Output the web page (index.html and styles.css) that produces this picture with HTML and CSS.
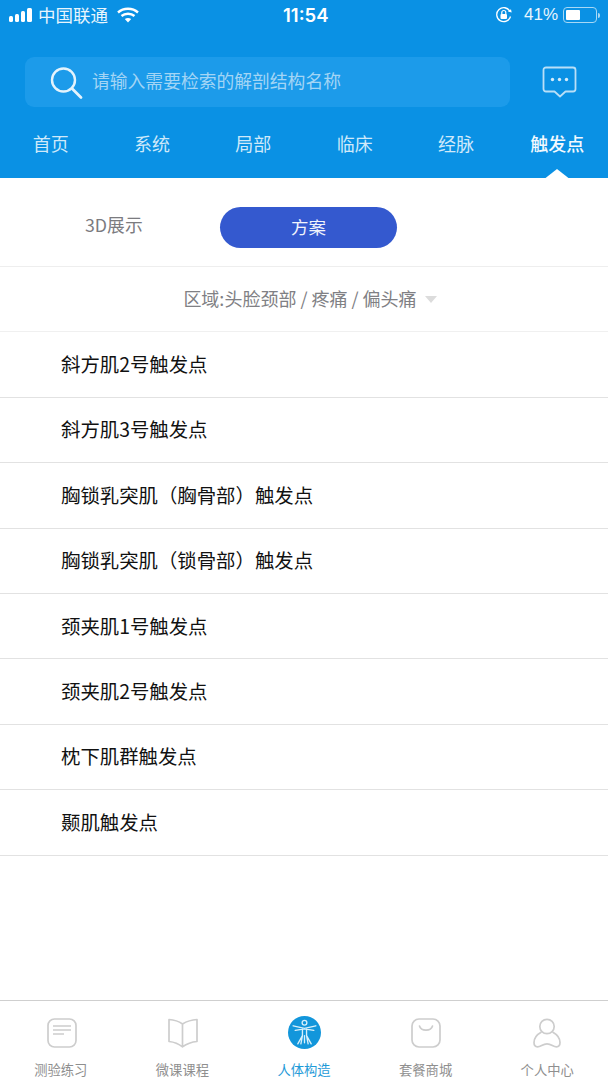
FILE: index.html
```html
<!DOCTYPE html>
<html lang="zh-CN">
<head>
<meta charset="utf-8">
<title>触发点</title>
<link rel="stylesheet" href="styles.css">
</head>
<body>
<div class="page">
  <header class="header">
    <div class="status">
      <div class="status-left">
        <svg class="signal" width="26" height="16" viewBox="0 0 26 16"><rect x="0" y="9" width="4" height="6" rx="1.5"/><rect x="6" y="7" width="4" height="8" rx="1.5"/><rect x="12" y="4" width="4" height="11" rx="1.5"/><rect x="18" y="1" width="5" height="14" rx="1.5"/></svg>
        <span class="carrier">中国联通</span>
        <svg class="wifi" width="22" height="16" viewBox="0 0 22 16"><path d="M1 5.5C6.5.5 15.500.5 21 5.500" fill="none" stroke="#fff" stroke-width="2.400"/><path d="M4.500 9C8 6 14 6 17.500 9" fill="none" stroke="#fff" stroke-width="2.400"/><path d="M7.800 12c2-1.500 4.400-1.500 6.400 0L11 15.500z" fill="#fff"/></svg>
      </div>
      <span class="time">11:54</span>
      <div class="status-right">
        <svg width="18" height="18" viewBox="0 0 18 18"><path d="M15.500 10.500A7 7 0 1 1 15 5.500" fill="none" stroke="#fff" stroke-width="1.300"/><path d="M13 6h4l-1.500-3z" fill="#fff" transform="rotate(15 15 5)"/><rect x="5.500" y="8" width="6.500" height="5" rx="1" fill="#fff"/><path d="M6.800 8V6.500a2 2 0 0 1 4 0V8" fill="none" stroke="#fff" stroke-width="1.200"/></svg>
        <span class="battery-pct">41%</span>
        <div class="battery"><div class="battery-fill"></div></div>
        <div class="battery-tip"></div>
      </div>
    </div>
    <div class="search-row">
      <div class="search">
        <svg class="search-icon" width="34" height="34" viewBox="0 0 34 34"><circle cx="14.500" cy="14" r="11.500" fill="none" stroke="#e4f3fc" stroke-width="2.400"/><path d="M23 22.500 L32 31.500" stroke="#e4f3fc" stroke-width="2.800" stroke-linecap="round"/></svg>
        <span class="search-text">请输入需要检索的解剖结构名称</span>
      </div>
      <svg class="msg" width="36" height="34" viewBox="0 0 36 34"><path d="M4 2.500H31a2.500 2.500 0 0 1 2.500 2.500V24a2.500 2.500 0 0 1-2.500 2.500H23.500L18 31.500 12.500 26.500H4A2.500 2.500 0 0 1 1.500 24V5A2.500 2.500 0 0 1 4 2.500Z" fill="none" stroke="#b9dff7" stroke-width="1.800" stroke-linejoin="round"/><circle cx="10.500" cy="14.500" r="1.700" fill="#d5ecfa"/><circle cx="17.500" cy="14.500" r="1.700" fill="#d5ecfa"/><circle cx="24.500" cy="14.500" r="1.700" fill="#d5ecfa"/></svg>
    </div>
    <nav class="tabs">
      <span class="tab">首页</span>
      <span class="tab">系统</span>
      <span class="tab">局部</span>
      <span class="tab">临床</span>
      <span class="tab">经脉</span>
      <span class="tab tab-active">触发点</span>
    </nav>
  </header>
  <div class="toggle-row">
    <span class="toggle-plain">3D展示</span>
    <span class="toggle-pill">方案</span>
  </div>
  <div class="filter-row">
    <span class="filter-text">区域:头脸颈部 / 疼痛 / 偏头痛</span>
    <span class="caret"></span>
  </div>
  <ul class="list">
    <li class="item">斜方肌2号触发点</li>
    <li class="item">斜方肌3号触发点</li>
    <li class="item">胸锁乳突肌（胸骨部）触发点</li>
    <li class="item">胸锁乳突肌（锁骨部）触发点</li>
    <li class="item">颈夹肌1号触发点</li>
    <li class="item">颈夹肌2号触发点</li>
    <li class="item">枕下肌群触发点</li>
    <li class="item">颞肌触发点</li>
  </ul>
  <footer class="tabbar">
    <div class="bar-item">
      <div class="bar-icon bar-icon-nudge"><svg width="30" height="30" viewBox="0 0 30 30"><rect x="1" y="1" width="28" height="28" rx="6.500" fill="none" stroke="#cdcdcd" stroke-width="1.700"/><path d="M6 8H24M6 12H24M6 16H17" stroke="#cdcdcd" stroke-width="1.700" fill="none"/></svg></div>
      <span class="bar-label">测验练习</span>
    </div>
    <div class="bar-item">
      <div class="bar-icon bar-icon-nudge"><svg width="30" height="30" viewBox="0 0 30 30"><path d="M14.500 6C11 3.500 6 1.800 1 1.500V23.500C6 24 11 26 14.500 28.800 18.500 26 23.500 24 29 23.500V1.500C23.500 1.800 18.500 3.500 14.500 6ZM14.500 6V28.800" fill="none" stroke="#cdcdcd" stroke-width="1.700" stroke-linejoin="round"/></svg></div>
      <span class="bar-label">微课课程</span>
    </div>
    <div class="bar-item bar-active">
      <div class="bar-icon bar-icon-nudge"><svg width="33" height="33" viewBox="0 0 32 32"><circle cx="16" cy="16" r="16" fill="#1296db"/><g fill="none" stroke="#d8f0fb" stroke-width="1.300" stroke-linecap="round"><circle cx="16" cy="6.500" r="2.300"/><path d="M5 9.500 16 12 27 9.500M7 14 16 12.500 25 14"/><path d="M14 12.500V19L9.500 27M18 12.500V19L22.500 27M16 19V26M14 19 12.500 27M18 19 19.500 27"/></g></svg></div>
      <span class="bar-label">人体构造</span>
    </div>
    <div class="bar-item">
      <div class="bar-icon"><svg width="30" height="30" viewBox="0 0 30 30"><rect x="1" y="1" width="28" height="28" rx="7" fill="none" stroke="#cdcdcd" stroke-width="1.700"/><path d="M8.500 8C10 13.500 20 13.500 21.500 8" fill="none" stroke="#cdcdcd" stroke-width="1.700" stroke-linecap="round"/></svg></div>
      <span class="bar-label">套餐商城</span>
    </div>
    <div class="bar-item">
      <div class="bar-icon"><svg width="28" height="30" viewBox="0 0 28 30"><circle cx="14" cy="8.500" r="7.200" fill="none" stroke="#cdcdcd" stroke-width="1.700"/><path d="M8.500 14C4 16.500 1 20.500 1 24.500 1 27.500 2.500 28.800 4.500 28.800 8 28.800 9.500 25.800 14 25.800S20 28.800 23.500 28.800C25.500 28.800 27 27.500 27 24.500 27 20.500 24 16.500 19.500 14" fill="none" stroke="#cdcdcd" stroke-width="1.700" stroke-linejoin="round"/></svg></div>
      <span class="bar-label">个人中心</span>
    </div>
  </footer>
</div>
</body>
</html>
```
FILE: styles.css
```css
* { box-sizing: border-box; }
html, body { margin: 0; padding: 0; }
body {
  background: #fff;
  font-family: "Noto Sans CJK SC", "Liberation Sans", sans-serif;
}
.page {
  width: 608px;
  height: 1080px;
  display: flex;
  flex-direction: column;
  overflow: hidden;
}
.header {
  height: 178px;
  background: #0a91e4;
  color: #fff;
  display: flex;
  flex-direction: column;
  flex: none;
}
.status {
  height: 57px;
  padding: 0 8px 27px 9px;
  display: flex;
  align-items: center;
  justify-content: space-between;
  position: relative;
}
.status-left, .status-right { display: flex; align-items: center; }
.signal { fill: #fff; margin-right: 3px; }
.carrier { font-size: 17.500px; line-height: 30px; color: #e8f5fd; }
.wifi { margin-left: 9px; }
.time {
  position: absolute;
  left: 283px;
  top: 0;
  font-family: "Inter", "Liberation Sans", sans-serif;
  font-weight: 600;
  font-size: 18.500px;
  line-height: 30px;
}
.battery-pct {
  font-family: "Liberation Sans", sans-serif;
  font-size: 17px;
  line-height: 30px;
  margin: 0 5px 0 11px;
  color: #e8f5fd;
}
.battery {
  width: 34px;
  height: 16px;
  border: 1px solid #a7d8f5;
  border-radius: 4px;
  padding: 2px;
}
.battery-fill { width: 14px; height: 100%; background: #fff; border-radius: 1px; }
.battery-tip { width: 2px; height: 5px; margin-left: 1px; background: #a7d8f5; border-radius: 0 2px 2px 0; }
.search-row {
  height: 50px;
  padding: 0 30px 0 25px;
  display: flex;
  align-items: center;
  justify-content: space-between;
  flex: none;
}
.search {
  width: 485px;
  height: 50px;
  background: #1c9bea;
  border-radius: 9px;
  display: flex;
  align-items: center;
  padding-left: 24px;
}
.search-icon { flex: none; margin-top: 2px; }
.search-text {
  font-size: 17.800px;
  line-height: 26px;
  color: #a3d5f5;
  margin-left: 9px;
  margin-top: -4px;
}
.msg { flex: none; margin-top: -1px; }
.tabs {
  flex: 1;
  display: grid;
  grid-template-columns: repeat(6, 1fr);
  align-items: center;
  padding-top: 1px;
}
.tab {
  position: relative;
  text-align: center;
  font-size: 18px;
  line-height: 26px;
  color: #cfe9fa;
}
.tab-active { color: #f2f9fe; font-weight: 500; }
.tab-active::after {
  content: "";
  position: absolute;
  left: 50%;
  bottom: -23.500px;
  margin-left: -14px;
  border-left: 14px solid transparent;
  border-right: 14px solid transparent;
  border-bottom: 11px solid #fff;
}
.toggle-row {
  height: 89px;
  flex: none;
  display: flex;
  align-items: center;
  padding-left: 85px;
  border-bottom: 1px solid #eeeeee;
}
.toggle-plain {
  font-size: 17.800px;
  line-height: 24px;
  color: #7b7b7f;
  margin-top: 4px;
  width: 135px;
}
.toggle-pill {
  width: 177px;
  height: 41px;
  margin-top: 11px;
  border-radius: 21px;
  background: #3459cf;
  color: #f1f4fc;
  font-size: 17.500px;
  line-height: 39px;
  text-align: center;
}
.filter-row {
  height: 65.400px;
  flex: none;
  display: flex;
  align-items: center;
  justify-content: center;
  border-bottom: 1px solid #f0f0f0;
  padding-left: 12px;
}
.filter-text {
  font-size: 18px;
  line-height: 26px;
  color: #808084;
  margin-top: -3px;
}
.caret {
  margin-left: 8px;
  border-left: 6.500px solid transparent;
  border-right: 6.500px solid transparent;
  border-top: 7px solid #dcdcdc;
}
.list { list-style: none; margin: 0; padding: 0; flex: none; }
.item {
  height: 65.400px;
  display: flex;
  align-items: center;
  padding: 0 0 2px 61px;
  font-size: 19.400px;
  color: #111;
  border-bottom: 1px solid #e2e2e2;
}
.tabbar {
  margin-top: auto;
  height: 80px;
  flex: none;
  border-top: 1px solid #cfcfcf;
  display: grid;
  grid-template-columns: repeat(5, 1fr);
  padding: 15px 0 0;
}
.bar-item {
  display: flex;
  flex-direction: column;
  align-items: center;
}
.bar-icon {
  height: 33px;
  display: flex;
  align-items: center;
  justify-content: center;
}
.bar-icon-nudge { padding-left: 2px; }
.bar-label {
  font-size: 13.300px;
  line-height: 18px;
  color: #8f8f8f;
  margin-top: 12px;
}
.bar-active .bar-label { color: #1f9bd8; }
```
